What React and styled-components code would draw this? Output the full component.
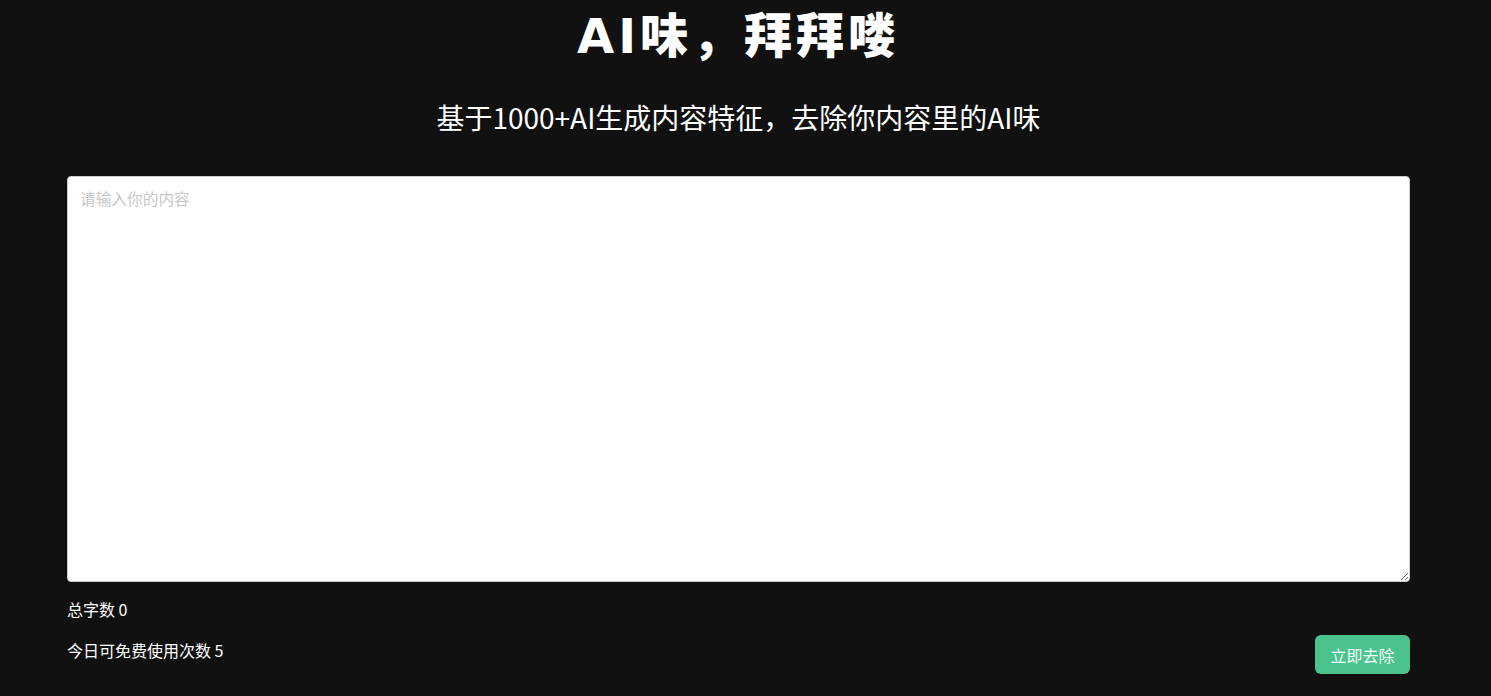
import React, { useState } from "react";
import styled, { createGlobalStyle } from "styled-components";

const Global = createGlobalStyle`
  html, body { margin: 0; padding: 0; background: #111111; }
  body { font-family: "Noto Sans CJK SC", "Noto Sans", sans-serif; color: #fff; }
  * { box-sizing: border-box; }
`;

const Page = styled.div`
  min-height: 696px;
  background: #111111;
  padding: 0 81px 0 67px;
  display: flex;
  flex-direction: column;
`;

const Title = styled.h1`
  margin: 0;
  text-align: center;
  font-family: "DejaVu Sans", "Noto Sans CJK SC", sans-serif;
  font-weight: 900;
  font-size: 48px;
  line-height: 72px;
  letter-spacing: 4px;
  color: #fff;
`;

const Subtitle = styled.p`
  margin: 25px 0 0;
  text-align: center;
  font-size: 28px;
  line-height: 40px;
  color: #fff;
`;

const Input = styled.textarea`
  margin-top: 39px;
  width: 100%;
  height: 406px;
  border: 1px solid #cccccc;
  border-radius: 4px;
  padding: 11px 12px;
  font-family: "Noto Sans CJK SC", sans-serif;
  font-size: 16px;
  line-height: 22px;
  color: #333;
  background: #fff;
  outline: none;
  resize: vertical;
  &::placeholder { color: #c8c8c8; font-size: 15.7px; }
`;

const Info = styled.div`
  margin-top: ${(p) => p.$top || 0}px;
  padding-top: ${(p) => p.$pad || 0}px;
  font-size: 16px;
  line-height: 20px;
  color: #fff;
`;

const Row = styled.div`
  margin-top: 16px;
  display: flex;
  justify-content: space-between;
  align-items: flex-start;
`;

const Button = styled.button`
  width: 95px;
  height: 39px;
  border: none;
  border-radius: 6px;
  background: #4ac48c;
  color: #f4fff9;
  font-family: "Noto Sans CJK SC", sans-serif;
  font-size: 16px;
  cursor: pointer;
`;

export default function App() {
  const [text, setText] = useState("");
  return (
    <>
      <Global />
      <Page>
        <Title>AI味，拜拜喽</Title>
        <Subtitle>基于1000+AI生成内容特征，去除你内容里的AI味</Subtitle>
        <Input
          placeholder="请输入你的内容"
          value={text}
          onChange={(e) => setText(e.target.value)}
        />
        <Info $top={17}>总字数 {text.length}</Info>
        <Row>
          <Info $pad={5}>今日可免费使用次数 5</Info>
          <Button>立即去除</Button>
        </Row>
      </Page>
    </>
  );
}
